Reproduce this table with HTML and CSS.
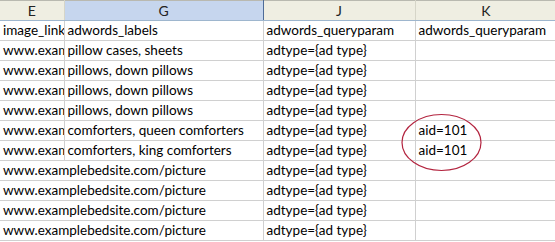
FILE: index.html
```html
<!DOCTYPE html>
<html>
<head>
<meta charset="utf-8">
<link rel="stylesheet" href="styles.css">
</head>
<body>
<div class="sheet">
<table class="grid">
<colgroup><col class="c-e"><col class="c-g"><col class="c-j"><col class="c-k"></colgroup>
<thead>
<tr><th>E</th><th class="sel">G</th><th>J</th><th>K</th></tr>
</thead>
<tbody>
<tr><td>image_link</td><td>adwords_labels</td><td>adwords_queryparam</td><td>adwords_queryparam</td></tr>
<tr><td>www.examplebedsite.com/picture</td><td>pillow cases, sheets</td><td>adtype={ad type}</td><td></td></tr>
<tr><td>www.examplebedsite.com/picture</td><td>pillows, down pillows</td><td>adtype={ad type}</td><td></td></tr>
<tr><td>www.examplebedsite.com/picture</td><td>pillows, down pillows</td><td>adtype={ad type}</td><td></td></tr>
<tr><td>www.examplebedsite.com/picture</td><td>pillows, down pillows</td><td>adtype={ad type}</td><td></td></tr>
<tr><td>www.examplebedsite.com/picture</td><td>comforters, queen comforters</td><td>adtype={ad type}</td><td>aid=101</td></tr>
<tr><td>www.examplebedsite.com/picture</td><td>comforters, king comforters</td><td>adtype={ad type}</td><td>aid=101</td></tr>
<tr><td colspan="2">www.examplebedsite.com/picture</td><td>adtype={ad type}</td><td></td></tr>
<tr><td colspan="2">www.examplebedsite.com/picture</td><td>adtype={ad type}</td><td></td></tr>
<tr><td colspan="2">www.examplebedsite.com/picture</td><td>adtype={ad type}</td><td></td></tr>
<tr><td colspan="2">www.examplebedsite.com/picture</td><td>adtype={ad type}</td><td></td></tr>
</tbody>
</table>
<svg class="circle" width="555" height="242" viewBox="0 0 555 242"><ellipse cx="441.5" cy="142.5" rx="39.5" ry="28" fill="none" stroke="#b3243f" stroke-width="1.2"/></svg>
</div>
</body>
</html>
```
FILE: styles.css
```css
html, body { margin: 0; padding: 0; background: #fff; }
.sheet { position: relative; width: 555px; height: 242px; overflow: hidden; }
.grid {
  border-collapse: collapse;
  table-layout: fixed;
  width: 557px;
  font-family: "Lato", "Liberation Sans", sans-serif;
  font-size: 13.5px;
  color: #000;
}
.c-e { width: 64px; }
.c-g { width: 199px; }
.c-j { width: 152px; }
.c-k { width: 142px; }
th {
  height: 19px;
  padding: 0;
  font-weight: normal;
  text-align: center;
  background: #efeee2;
  border-top: 1px solid #b9b9b0;
  border-bottom: 1px solid #9eb6ce;
  border-right: 1px solid #d6d5c8;
  color: #222;
  font-size: 14px;
  line-height: 18px;
}
th.sel { background: #c6d6ee; border-left: 1px solid #4f6c97; border-right: 1px solid #4f6c97; }
td {
  height: 19px;
  padding: 0 0 0 3px;
  border: 1px solid #d0d0d0;
  border-top: none;
  white-space: nowrap;
  overflow: hidden;
  line-height: 19px;
  vertical-align: bottom;
}
td:first-child { border-left: none; }
.circle { position: absolute; left: 0; top: 0; pointer-events: none; }
```
